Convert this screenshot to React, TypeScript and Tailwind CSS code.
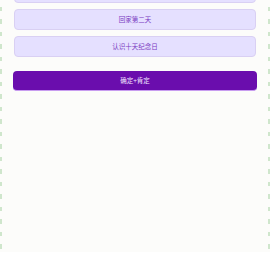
import React from "react";

const items = ["回家第二天", "认识十天纪念日"];

export default function App() {
  return (
    <div
      className="min-h-[270px] w-[270px] [background:repeating-linear-gradient(#cfe6cc_0_4px,transparent_4px_12.5px)_left_top/2px_100%_no-repeat,repeating-linear-gradient(#cfe6cc_0_4px,transparent_4px_12.5px)_right_top/2px_100%_no-repeat,#fcfcfa]"
      style={{ fontFamily: '"Noto Sans CJK SC", "Noto Sans", sans-serif' }}
    >
      <div className="flex flex-col gap-[6px] px-[14px] -mt-[18px]">
        <div className="h-[21px] rounded-[4px] border border-[#d9d0f3] bg-[#e5e0ff]" />
        {items.map((t) => (
          <div
            key={t}
            className="h-[21px] flex items-center justify-center rounded-[4px] border border-[#d9d0f3] bg-[#e5e0ff] text-[6.5px] text-[#7a3bc2]"
          >
            {t}
          </div>
        ))}
      </div>
      <div className="px-[13px] mt-[14px]">
        <button className="w-full h-[20px] flex items-center justify-center rounded-[4px] bg-[#6a0dad] text-[6.5px] text-[#f3e8ff] border-b border-[#c89cf0]">
          确定+肯定
        </button>
      </div>
    </div>
  );
}
